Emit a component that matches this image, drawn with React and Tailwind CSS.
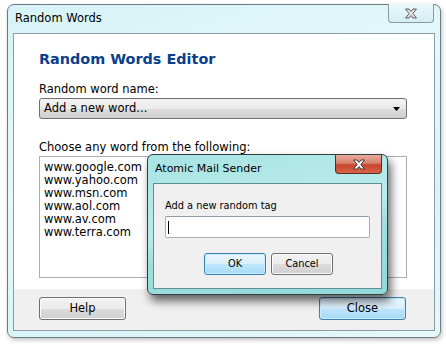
import React from 'react';

const font = { fontFamily: '"DejaVu Sans", Tahoma, sans-serif' };

const XGlyph = ({ fill = '#ffffff', stroke = '#3a3a3a' }) => (
  <svg width="14" height="11" viewBox="0 0 14 11">
    <path
      d="M1.5 1 H5 L7 3.5 L9 1 H12.5 L8.8 5.5 L12.5 10 H9 L7 7.5 L5 10 H1.5 L5.2 5.5 Z"
      fill={fill}
      stroke={stroke}
      strokeWidth="1"
      strokeLinejoin="round"
    />
  </svg>
);

const GrayButton = ({ children, className = '' }) => (
  <div
    className={`flex items-center justify-center rounded-[3px] border border-[#707070] bg-[linear-gradient(#f2f2f2_0%,#ebebeb_50%,#dddddd_51%,#cfcfcf_100%)] text-black shadow-[inset_0_0_0_1px_#fbfbfb] ${className}`}
  >
    {children}
  </div>
);

const BlueButton = ({ children, className = '' }) => (
  <div
    className={`flex items-center justify-center rounded-[3px] border border-[#3c7fb1] bg-[linear-gradient(#eaf6fd_0%,#d9f0fc_50%,#bee6fd_51%,#a7d9f5_100%)] text-black shadow-[inset_0_0_0_1px_#c8ecfc] ${className}`}
  >
    {children}
  </div>
);

const words = ['www.google.com', 'www.yahoo.com', 'www.msn.com', 'www.aol.com', 'www.av.com', 'www.terra.com'];

export default function App() {
  return (
    <div className="relative h-[346px] w-[446px] overflow-hidden bg-white" style={font}>
      {/* main window */}
      <div className="ml-[7px] mt-[4px] flex h-[334px] w-[434px] flex-col rounded-[7px] border border-[#6b7b84] bg-[linear-gradient(160deg,#d6f3f7_0%,#e3f8fa_40%,#d9f4f7_70%,#e6f8fa_100%)] shadow-[1px_2px_4px_rgba(0,0,0,0.25)]">
        <div className="relative flex h-[28px] items-center pl-[7px]">
          <span className="text-[11.5px] text-black">Random Words</span>
          <div className="absolute right-[6px] top-[-1px] flex h-[19px] w-[46px] items-center justify-center rounded-b-[4px] border border-t-0 border-[#8a9aa4] bg-[linear-gradient(#eaf9fb,#d3eef3)]">
            <XGlyph fill="#e8e8e8" stroke="#5a5a62" />
          </div>
        </div>
        <div className="mx-[5px] mb-[6px] flex flex-1 flex-col border border-[#8d9ca6] bg-white">
          <div className="flex flex-1 flex-col pl-[25px] pr-[27px] text-[11.5px]">
            <div className="mt-[16px] text-[14.4px] font-bold leading-[19px] text-[#0b3f8c]">Random Words Editor</div>
            <div className="mt-[14px] leading-[13px] text-black">Random word name:</div>
            <div className="mt-[2px] flex h-[21px] items-center justify-between rounded-[3px] border border-[#707070] bg-[linear-gradient(#f2f2f2_0%,#ebebeb_50%,#dddddd_51%,#cfcfcf_100%)] pl-[4px] pr-[6px] text-black">
              <span>Add a new word...</span>
              <svg width="7" height="4" viewBox="0 0 7 4">
                <path d="M0 0 H7 L3.5 4 Z" fill="#000" />
              </svg>
            </div>
            <div className="mt-[22px] leading-[13px] text-black">Choose any word from the following:</div>
            <div className="mt-[2px] h-[122px] border border-[#abadb3] px-[4px] pt-[4px] leading-[13px] text-black">
              {words.map((w) => (
                <div key={w}>{w}</div>
              ))}
            </div>
          </div>
          <div className="flex h-[41px] items-start justify-between bg-[#f0f0f0] pl-[25px] pr-[28px] pt-[8px] text-[11.5px]">
            <GrayButton className="h-[23px] w-[87px]">Help</GrayButton>
            <BlueButton className="h-[23px] w-[87px]">Close</BlueButton>
          </div>
        </div>
      </div>

      {/* dialog */}
      <div className="absolute left-[147px] top-[154px] flex h-[141px] w-[241px] flex-col rounded-[6px] border border-[#2f3f44] bg-[linear-gradient(170deg,#a9e3e3_0%,#b9ecec_45%,#9fdede_60%,#92d9da_100%)] shadow-[3px_6px_10px_rgba(0,0,0,0.6)]">
        <div className="relative flex h-[28px] items-center pl-[7px]">
          <span className="text-[11px] text-black">Atomic Mail Sender</span>
          <div className="absolute right-[5px] top-[0px] flex h-[19px] w-[47px] items-center justify-center rounded-b-[4px] border border-t-0 border-[#5b2a22] bg-[linear-gradient(#e9a99a_0%,#d9826e_45%,#c8432c_55%,#d8644a_100%)]">
            <XGlyph fill="#ffffff" stroke="#3a3a3a" />
          </div>
        </div>
        <div className="mx-[5px] mb-[5px] flex flex-1 flex-col border border-[#5f8f94] bg-[#f0f0f0] pl-[11px] text-[9.8px]">
          <div className="mt-[16px] leading-[12px] text-black">Add a new random tag</div>
          <div className="mt-[4px] flex h-[22px] w-[205px] items-center rounded-[2px] border border-[#abadb3] border-t-[#8e9aa6] bg-white pl-[2px]">
            <div className="h-[13px] w-[1px] bg-black" />
          </div>
          <div className="mt-[15px] flex gap-[5px] pl-[39px]">
            <BlueButton className="h-[22px] w-[62px]">OK</BlueButton>
            <GrayButton className="h-[22px] w-[62px]">Cancel</GrayButton>
          </div>
        </div>
      </div>
    </div>
  );
}
